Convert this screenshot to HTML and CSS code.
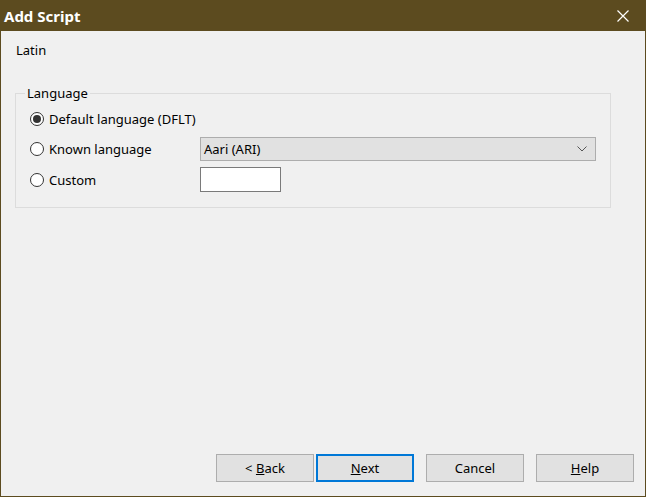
FILE: index.html
```html
<!DOCTYPE html>
<html>
<head>
<meta charset="utf-8">
<link rel="stylesheet" href="styles.css">
</head>
<body>
<div class="window">
  <div class="titlebar">
    <span class="title">Add Script</span>
    <span class="close">
      <svg width="12" height="12" viewBox="0 0 12 12"><path d="M0.5 0.5 L11.5 11.5 M11.5 0.5 L0.5 11.5" stroke="#fff" stroke-width="1.2" fill="none"/></svg>
    </span>
  </div>
  <div class="content">
    <div class="script-name">Latin</div>
    <fieldset class="group">
      <legend class="group-label">Language</legend>
      <div class="grid">
        <label class="radio"><span class="dot checked"></span><span>Default language (DFLT)</span></label>
        <span></span>
        <label class="radio"><span class="dot"></span><span>Known language</span></label>
        <div class="select"><span>Aari (ARI)</span>
          <svg width="10" height="6" viewBox="0 0 10 6"><path d="M0.5 0.5 L5 5 L9.5 0.5" stroke="#555" stroke-width="1" fill="none"/></svg>
        </div>
        <label class="radio"><span class="dot"></span><span>Custom</span></label>
        <div class="textbox"></div>
      </div>
    </fieldset>
    <div class="spacer"></div>
    <div class="buttons">
      <div class="pair">
        <button class="btn">&lt; <u>B</u>ack</button>
        <button class="btn default"><u>N</u>ext</button>
      </div>
      <button class="btn">Cancel</button>
      <button class="btn"><u>H</u>elp</button>
    </div>
  </div>
</div>
</body>
</html>
```
FILE: styles.css
```css
* { box-sizing: border-box; }
html, body { margin: 0; padding: 0; background: #f0f0f0; }
body { font-family: "Noto Sans", "Open Sans", sans-serif; font-size: 13px; color: #000; }
.window {
  width: 646px; height: 497px;
  border: 1px solid #5c4b1f; border-top: none;
  display: flex; flex-direction: column;
  background: #f0f0f0;
}
.titlebar {
  height: 31px; flex: none;
  background: #5c4b1f; color: #fff;
  display: flex; align-items: center; justify-content: space-between;
  padding: 1px 0 0 4px;
  margin: 0 -1px;
}
.title { font-weight: bold; font-size: 15px; }
.close { width: 46px; height: 31px; display: flex; align-items: center; justify-content: center; }
.content {
  flex: 1; display: flex; flex-direction: column;
  padding: 11px 11px 14px 14px;
}
.script-name { line-height: 16px; padding-left: 1px; }
.group {
  margin: 27px 0 0 0;
  width: 596px;
  border: 1px solid #dcdcdc;
  padding: 6px 14px 15px 15px;
}
.group-label { padding: 0 2px; margin-left: -6px; line-height: 16px; }
.grid {
  display: grid;
  grid-template-columns: 169px 396px;
  grid-template-rows: 24px 24px 25px;
  row-gap: 6px;
  align-items: center;
}
.radio { display: flex; align-items: center; gap: 5px; margin-left: -1px; }
.dot {
  width: 14px; height: 14px; border-radius: 50%;
  border: 1px solid #333; background: #fff;
  display: flex; align-items: center; justify-content: center;
}
.dot.checked::after {
  content: ""; width: 8px; height: 8px; border-radius: 50%; background: #333;
}
.select {
  height: 24px; border: 1px solid #adadad; background: #e1e1e1;
  display: flex; align-items: center; justify-content: space-between;
  padding: 0 8px 0 3px;
}
.textbox { width: 81px; height: 25px; border: 1px solid #7a7a7a; background: #fff; }
.spacer { flex: 1; }
.buttons { display: flex; justify-content: flex-end; gap: 12px; }
.pair { display: flex; gap: 2px; }
.btn {
  width: 98px; height: 28px;
  font-family: inherit; font-size: 13px; color: #000;
  background: #e1e1e1; border: 1px solid #adadad;
  padding: 0; margin: 0;
}
.btn.default { border: 2px solid #0078d7; }
```
